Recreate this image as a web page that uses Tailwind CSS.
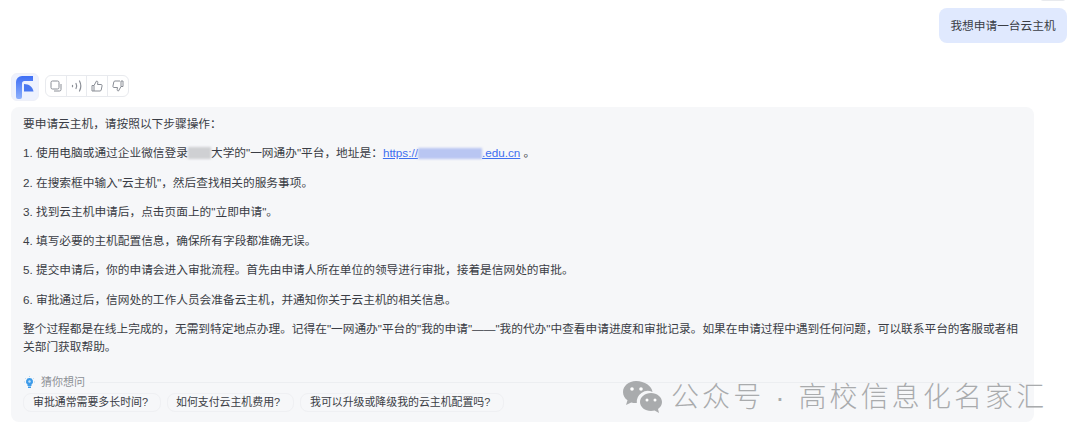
<!DOCTYPE html>
<html lang="zh-CN">
  <head>
    <meta charset="UTF-8" />
    <meta name="viewport" content="width=device-width, initial-scale=1.0" />
    <title>云主机申请</title>
    <script src="https://cdn.jsdelivr.net/npm/@tailwindcss/browser@4"></script>
  </head>

  <body class="relative h-[443px] w-[1080px] overflow-hidden bg-white font-['Liberation_Sans','Noto_Sans_CJK_SC',sans-serif] text-[#3a3d45]">
    <!-- Cut-off control above the message -->
    <div class="absolute left-[1040px] top-[-10px] h-[11px] w-[26px] rounded-[3px] border border-[#e8eaee]"></div>

    <!-- User message -->
    <div class="flex justify-end pr-[13px] pt-2">
      <div class="flex h-[35px] w-[128px] items-center justify-center rounded-[8px] bg-[#e0e9fe] text-[11.7px]">我想申请一台云主机</div>
    </div>

    <!-- Toolbar -->
    <div class="mt-[30px] flex items-center gap-[6px] pl-[11px]">
      <div class="flex h-[28px] w-[28px] items-center justify-center rounded-[6px] border border-[#eef0f8] bg-[#eef2fe]">
        <svg width="18" height="23" viewBox="0 0 18 23">
          <defs>
            <linearGradient id="logo" x1="0" y1="0" x2="0" y2="1">
              <stop offset="0" stop-color="#3f6ff5" />
              <stop offset="1" stop-color="#8db0fc" />
            </linearGradient>
          </defs>
          <path d="M0 21V6a6 6 0 0 1 6-6h11v5H8.500A2.500 2.500 0 0 0 6 7.500V21a2 2 0 0 1-2 2H2a2 2 0 0 1-2-2z" fill="url(#logo)" />
          <path d="M8 15.500V8c5 0 8.500 2.700 9.500 7.500z" fill="#4a78f0" />
        </svg>
      </div>
      <div class="mb-[2px] flex h-[22px] items-center rounded-[6px] border border-[#e8eaee]">
        <button class="flex h-full w-[21px] items-center justify-center border-r border-[#e8eaee]">
          <svg width="12" height="12" viewBox="0 0 12 12" fill="none" stroke="#8a8e96"><rect x="1" y="1" width="8" height="8" rx="1.500" /><path d="M4 11h5.500a1.500 1.500 0 0 0 1.500-1.500V4" /></svg>
        </button>
        <button class="flex h-full w-[20px] items-center justify-center border-r border-[#e8eaee]">
          <svg width="12" height="12" viewBox="0 0 12 12" fill="none" stroke="#8a8e96" stroke-width="1.200"><path d="M1.500 5.300v1.400M5 3.500c.9 1.600.9 3.400 0 5M8.500 1c1.700 3.200 1.700 6.800 0 10" stroke-linecap="round" /></svg>
        </button>
        <button class="flex h-full w-[21px] items-center justify-center border-r border-[#e8eaee]">
          <svg width="12" height="12" viewBox="0 0 12 12" fill="none" stroke="#8a8e96"><path d="M1 5.500h2V11H1zM3 5.500 5.500 1c1 0 1.500.7 1.300 1.700L6.500 4.500h3.600c.7 0 1.100.6 1 1.200l-.9 4.300c-.1.600-.6 1-1.200 1H3" stroke-linejoin="round" /></svg>
        </button>
        <button class="flex h-full w-[20px] items-center justify-center">
          <svg width="12" height="12" viewBox="0 0 12 12" fill="none" stroke="#8a8e96"><path d="M11 6.500H9V1h2zM9 6.500 6.500 11c-1 0-1.500-.7-1.300-1.700l.3-1.800H1.900c-.7 0-1.100-.6-1-1.200l.9-4.300c.1-.6.600-1 1.200-1h5" stroke-linejoin="round" /></svg>
        </button>
      </div>
    </div>

    <!-- Answer card -->
    <div class="mt-[6px] ml-[11px] h-[315px] w-[1023px] rounded-[8px] bg-[#f6f7f9] pl-[12px] pr-[8px] pt-[8px] text-[11.7px] leading-[17px]">
      <p>要申请云主机，请按照以下步骤操作：</p>
      <p class="mt-[12.300px]">1. 使用电脑或通过企业微信登录<span class="inline-block h-[12px] w-[23px] translate-y-[2px] bg-[#cfd0d3] blur-[1px]"></span>大学的"一网通办"平台，地址是：<a class="text-[#3f6ff0] underline">https://<span class="inline-block h-[11px] w-[64px] translate-y-[2px] bg-[#b9c6f2] blur-[1px]"></span>.edu.cn</a> 。</p>
      <p class="mt-[12.300px]">2. 在搜索框中输入"云主机"，然后查找相关的服务事项。</p>
      <p class="mt-[12.300px]">3. 找到云主机申请后，点击页面上的"立即申请"。</p>
      <p class="mt-[12.300px]">4. 填写必要的主机配置信息，确保所有字段都准确无误。</p>
      <p class="mt-[12.300px]">5. 提交申请后，你的申请会进入审批流程。首先由申请人所在单位的领导进行审批，接着是信网处的审批。</p>
      <p class="mt-[12.300px]">6. 审批通过后，信网处的工作人员会准备云主机，并通知你关于云主机的相关信息。</p>
      <p class="mt-[12.300px] leading-[18px]">整个过程都是在线上完成的，无需到特定地点办理。记得在"一网通办"平台的"我的申请"——"我的代办"中查看申请进度和审批记录。如果在申请过程中遇到任何问题，可以联系平台的客服或者相关部门获取帮助。</p>

      <!-- Suggestions -->
      <div class="mt-[18px] flex items-center pr-[4px]">
        <svg class="mr-[6px] ml-[1px]" width="11" height="13" viewBox="0 0 11 13"><path d="M5.500 2a3.500 3.500 0 0 0-2 6.400V10h4V8.400a3.500 3.500 0 0 0-2-6.400z" fill="#3d9be9" /><rect x="4" y="10.500" width="3" height="1.500" fill="#3d9be9" /><circle cx="5.500" cy="5.500" r="1.200" fill="#bfe0fa" /><path d="M5.500 0v1M1 2l.7.7M10 2l-.7.7M0 6h1M10 6h1" stroke="#8cc4f2" stroke-width=".7" /></svg>
        <span class="text-[11px] text-[#8d9096]">猜你想问</span>
        <div class="ml-[5px] h-px flex-1 bg-[#eceef1]"></div>
      </div>
      <div class="mt-[2px] flex gap-[6px] text-[10.900px]">
        <span class="flex h-[19px] w-[138px] items-center rounded-[8px] border border-[#eff0f3] pl-[9px]">审批通常需要多长时间?</span>
        <span class="flex h-[19px] w-[127px] items-center rounded-[8px] border border-[#eff0f3] pl-[8px]">如何支付云主机费用?</span>
        <span class="flex h-[19px] w-[204px] items-center rounded-[8px] border border-[#eff0f3] pl-[9px]">我可以升级或降级我的云主机配置吗?</span>
      </div>
    </div>

    <!-- Watermark -->
    <div class="absolute left-[622px] top-[380px] flex items-center text-[#a9abad]">
      <svg width="44" height="36" viewBox="0 0 44 36" fill="#a9abad">
        <path d="M14 1C6.500 1 1 6 1 12c0 3.500 1.800 6.300 4.500 8.300L4 25l5.200-2.600c1.500.4 3 .6 4.800.6h.8a11 11 0 0 1 15.700-11C29.800 6 22.800 1 14 1z" />
        <path d="M29 13c-6 0-11 4-11 9s5 9 11 9c1.300 0 2.500-.2 3.600-.5L37 33l-1-4c2.500-1.700 4-4.200 4-7 0-5-5-9-11-9z" />
        <circle cx="10" cy="9" r="1.800" fill="#fff" /><circle cx="19" cy="9" r="1.800" fill="#fff" /><circle cx="25" cy="20" r="1.500" fill="#fff" /><circle cx="33" cy="20" r="1.500" fill="#fff" />
      </svg>
      <span class="ml-[5px] text-[28px] leading-[36px] tracking-[3.100px] font-light">公众号 · 高校信息化名家汇</span>
    </div>
  </body>
</html>
